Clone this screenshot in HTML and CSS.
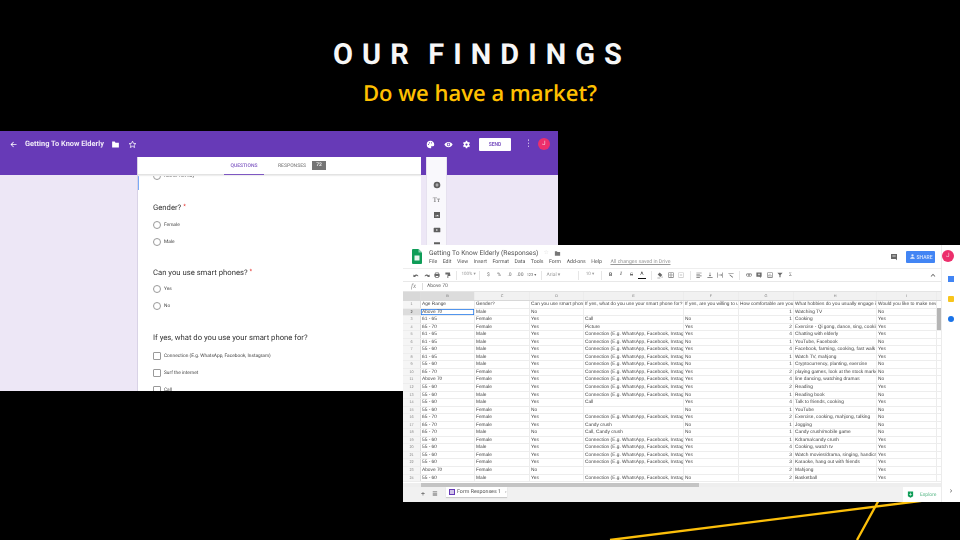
FILE: index.html
```html
<!DOCTYPE html>
<html lang="en">
<head>
<meta charset="utf-8">
<title>Our Findings</title>
<link rel="stylesheet" href="styles.css">
</head>
<body>
<main class="slide">
  <svg class="rays" width="960" height="540" viewBox="0 0 960 540"><path d="M610 540 L960 496 M857 540 L880 498" /></svg>
  <header class="heading">
    <h1>OUR FINDINGS</h1>
    <h2>Do we have a market?</h2>
  </header>

  <section class="form-win">
    <div class="form-top">
      <svg class="ic back" viewBox="0 0 24 24"><path d="M20 11H8l5-5-1.500-1.500L4 12l7.500 7.500L13 18l-5-5h12z"/></svg>
      <span class="form-title">Getting To Know Elderly</span>
      <svg class="ic folder" viewBox="0 0 24 24"><path d="M10 4H3v16h18V7H12z"/></svg>
      <svg class="ic star" viewBox="0 0 24 24"><path d="M12 3l2.700 6 6.300.6-4.800 4.200 1.500 6.200-5.700-3.300L6.300 20l1.500-6.200L3 9.600 9.300 9z" fill="none" stroke="#fff" stroke-width="2"/></svg>
      <span class="spacer"></span>
      <svg class="ic palette" viewBox="0 0 24 24"><path fill-rule="evenodd" d="M12 2a10 10 0 0 0 0 20c2 0 2.500-1.500 1.700-2.700-.8-1.200 0-2.800 1.800-2.800H18a4 4 0 0 0 4-4C22 6.500 17.500 2 12 2zM6.500 10a1.500 1.500 0 1 1 0 3 1.500 1.500 0 0 1 0-3zm3-4a1.500 1.500 0 1 1 0 3 1.500 1.500 0 0 1 0-3zm5 0a1.500 1.500 0 1 1 0 3 1.500 1.500 0 0 1 0-3z"/></svg>
      <svg class="ic eye" viewBox="0 0 24 24"><path fill-rule="evenodd" d="M12 5C7 5 3 8 1 12c2 4 6 7 11 7s9-3 11-7c-2-4-6-7-11-7zm0 2.500a4.500 4.500 0 1 1 0 9 4.500 4.500 0 0 1 0-9zm0 2a2.500 2.500 0 1 0 0 5 2.500 2.500 0 0 0 0-5z"/></svg>
      <svg class="ic gear" viewBox="0 0 24 24"><path fill-rule="evenodd" d="M10 2h4l.5 3 2 1 2.700-1 2 3.500-2.400 2v3l2.400 2-2 3.500-2.700-1-2 1-.5 3h-4l-.5-3-2-1-2.700 1-2-3.500 2.400-2v-3l-2.400-2 2-3.500 2.700 1 2-1zM12 9a3 3 0 1 0 0 6 3 3 0 0 0 0-6z"/></svg>
      <button class="send">SEND</button>
      <span class="dots">⋮</span>
      <span class="avatar">J</span>
    </div>
    <div class="form-body">
      <div class="form-card">
        <nav class="tabs">
          <span class="tab active">QUESTIONS</span>
          <span class="tab">RESPONSES</span>
          <span class="count">72</span>
        </nav>
        <div class="questions">
          <div class="clipped"><i class="radio"></i><span>Rather not say</span></div>
          <h3 class="q q-first">Gender? <b>*</b></h3>
          <div class="opt"><i class="radio"></i><span>Female</span></div>
          <div class="opt"><i class="radio"></i><span>Male</span></div>
          <h3 class="q q-wide">Can you use smart phones? <b>*</b></h3>
          <div class="opt"><i class="radio"></i><span>Yes</span></div>
          <div class="opt"><i class="radio"></i><span>No</span></div>
          <h3 class="q q-last">If yes, what do you use your smart phone for?</h3>
          <div class="opt"><i class="check"></i><span>Connection (E.g. WhatsApp, Facebook, Instagram)</span></div>
          <div class="opt"><i class="check"></i><span>Surf the internet</span></div>
          <div class="opt"><i class="check"></i><span>Call</span></div>
        </div>
      </div>
      <aside class="tools">
        <svg class="tool" viewBox="0 0 24 24"><path fill-rule="evenodd" d="M12 2a10 10 0 1 1 0 20 10 10 0 0 1 0-20zm-1 5v4H7v2h4v4h2v-4h4v-2h-4V7z"/></svg>
        <span class="tool tool-t">Tт</span>
        <svg class="tool" viewBox="0 0 24 24"><path fill-rule="evenodd" d="M3 3h18v18H3zm3 13h12l-4-5-3 3.500-2-2z"/></svg>
        <svg class="tool" viewBox="0 0 24 24"><path fill-rule="evenodd" d="M4 5h16a2 2 0 0 1 2 2v10a2 2 0 0 1-2 2H4a2 2 0 0 1-2-2V7a2 2 0 0 1 2-2zm6 4v6l5-3z"/></svg>
        <svg class="tool" viewBox="0 0 24 24"><path d="M3 4h18v6H3zM3 14h18v6H3z"/></svg>
      </aside>
    </div>
  </section>

  <section class="sheet-win">
    <div class="sheet-main">
      <div class="sheet-top">
        <svg class="logo" viewBox="0 0 20 30"><path d="M0 2a2 2 0 0 1 2-2h11l7 7v21a2 2 0 0 1-2 2H2a2 2 0 0 1-2-2z" fill="#0f9d58"/><path d="M13 0l7 7h-7z" fill="#87ceac"/><rect x="5" y="13" width="10" height="10" fill="#e8f5ee"/></svg>
        <div class="sheet-heading">
          <div class="sheet-title">Getting To Know Elderly (Responses) <span class="s-star">☆</span> <svg class="s-folder" viewBox="0 0 24 24"><path d="M10 4H3v16h18V7H12z"/></svg></div>
          <div class="menu"><span>File</span><span>Edit</span><span>View</span><span>Insert</span><span>Format</span><span>Data</span><span>Tools</span><span>Form</span><span>Add-ons</span><span>Help</span><u>All changes saved in Drive</u></div>
        </div>
        <span class="spacer"></span>
        <svg class="comment" viewBox="0 0 24 24"><path d="M3 3h18v19l-4-4H3z"/><path d="M7 7h10v1.500H7zM7 10.500h10V12H7z" fill="#ddd"/></svg>
        <button class="share"><svg viewBox="0 0 24 24"><path d="M12 4a4 4 0 1 1 0 8 4 4 0 0 1 0-8zM4 20c0-3 4-6 8-6s8 3 8 6z"/></svg>SHARE</button>
        <span class="avatar s-avatar">J</span>
      </div>
      <div class="toolbar">
        <svg class="tb" viewBox="0 0 24 24"><path d="M4 15c2-5 9-7 14-2l3-3v9h-9l3-3c-3-3-8-2-10 1z"  transform="matrix(-1 0 0 1 24 0)"/></svg>
        <svg class="tb" viewBox="0 0 24 24"><path d="M4 15c2-5 9-7 14-2l3-3v9h-9l3-3c-3-3-8-2-10 1z"/></svg>
        <svg class="tb" viewBox="0 0 24 24"><path d="M6 3h12v5h3v10h-3v3H6v-3H3V8h3zm2 2v3h8V5zm0 10v4h8v-4z"/></svg>
        <svg class="tb" viewBox="0 0 24 24"><path d="M3 3h16v7H3zM11 10h9v5h-7v7h-3v-9h1z"/></svg>
        <em></em>
        <span class="w14">100% ▾</span><em></em>
        <span>$</span><span>%</span><span>.0</span><span>.00</span><span class="w9">123 ▾</span><em></em>
        <span class="w30">Arial ▾</span><em></em>
        <span class="w14">10 ▾</span><em></em>
        <span class="bd">B</span><span class="it">I</span><span class="st">S</span><span class="ul">A</span><em></em>
        <svg class="tb" viewBox="0 0 24 24"><path d="M11 3l9 9-7 7-9-9zM19 16c2 3 2 5 0 5s-2-2 0-5zM3 21h10v2H3z"/></svg>
        <svg class="tb" viewBox="0 0 24 24"><path fill-rule="evenodd" d="M3 3h18v18H3zm2 2v6h6V5zm8 0v6h6V5zm-8 8v6h6v-6zm8 0v6h6v-6z"/></svg>
        <svg class="tb light" viewBox="0 0 24 24"><path fill-rule="evenodd" d="M3 3h18v18H3zm2 2v14h14V5zm3 5h8v4H8z"/></svg>
        <em></em>
        <svg class="tb" viewBox="0 0 24 24"><path d="M3 4h18v2H3zM3 9h12v2H3zM3 14h18v2H3zM3 19h12v2H3z"/></svg>
        <svg class="tb" viewBox="0 0 24 24"><path d="M3 19h18v2H3zM11 3h2v9h3l-4 5-4-5h3z"/></svg>
        <svg class="tb" viewBox="0 0 24 24"><path d="M3 3h2v18H3zM19 3h2v18h-2zM7 11h8V8l4 4-4 4v-3H7z"/></svg>
        <svg class="tb" viewBox="0 0 24 24"><path d="M3 5h18v2H3zM8 10l11 9-1.500 2L6.500 12z"/></svg>
        <em></em>
        <svg class="tb" viewBox="0 0 24 24"><path fill-rule="evenodd" d="M7 7h10a5 5 0 0 1 0 10H7A5 5 0 0 1 7 7zm0 2a3 3 0 0 0 0 6h3V9zm7 0v6h3a3 3 0 0 0 0-6z"/></svg>
        <svg class="tb" viewBox="0 0 24 24"><path fill-rule="evenodd" d="M3 3h18v15h-3v4l-4-4H3zm8 3v3H8v2h3v3h2v-3h3V9h-3V6z"/></svg>
        <svg class="tb" viewBox="0 0 24 24"><path fill-rule="evenodd" d="M3 3h18v18H3zm2 2v14h14V5zm2 6h2v6H7zm4-3h2v9h-2zm4 5h2v4h-2z"/></svg>
        <svg class="tb" viewBox="0 0 24 24"><path d="M3 4h18l-7 8v8h-4v-8z"/></svg>
        <span>Σ</span>
        <span class="spacer"></span><svg class="tb" viewBox="0 0 24 24"><path d="M12 8l8 8-2 2-6-6-6 6-2-2z"/></svg>
      </div>
      <div class="fx"><i>fx</i><span>Above 70</span></div>
      <div class="grid">
        <div class="row head"><span class="n"></span><span>B</span><span>C</span><span>D</span><span>E</span><span>F</span><span>G</span><span>H</span><span>I</span></div>
        <div class="row"><span class="n">1</span><span>Age Range</span><span>Gender?</span><span>Can you use smart phones?</span><span>If yes, what do you use your smart phone for?</span><span>If yes, are you willing to use</span><span>How comfortable are you</span><span>What hobbies do you usually engage in?</span><span>Would you like to make new friends?</span></div>
        <div class="row sel"><span class="n">2</span><span class="cur">Above 70</span><span>Male</span><span>No</span><span></span><span></span><span class="r">1</span><span>Watching TV</span><span>No</span></div>
        <div class="row"><span class="n">3</span><span>61 - 65</span><span>Female</span><span>Yes</span><span>Call</span><span>No</span><span class="r">1</span><span>Cooking</span><span>Yes</span></div>
        <div class="row"><span class="n">4</span><span>65 - 70</span><span>Female</span><span>Yes</span><span>Picture</span><span>Yes</span><span class="r">2</span><span>Exercise - Qi gong, dance, sing, cooking</span><span>Yes</span></div>
        <div class="row"><span class="n">5</span><span>61 - 65</span><span>Male</span><span>Yes</span><span>Connection (E.g. WhatsApp, Facebook, Instagram)</span><span>Yes</span><span class="r">4</span><span>Chatting with elderly</span><span>Yes</span></div>
        <div class="row"><span class="n">6</span><span>61 - 65</span><span>Male</span><span>Yes</span><span>Connection (E.g. WhatsApp, Facebook, Instagram)</span><span>No</span><span class="r">1</span><span>YouTube, Facebook</span><span>No</span></div>
        <div class="row"><span class="n">7</span><span>55 - 60</span><span>Male</span><span>Yes</span><span>Connection (E.g. WhatsApp, Facebook, Instagram)</span><span>Yes</span><span class="r">4</span><span>Facebook, farming, cooking, fast walk</span><span>Yes</span></div>
        <div class="row"><span class="n">8</span><span>61 - 65</span><span>Male</span><span>Yes</span><span>Connection (E.g. WhatsApp, Facebook, Instagram)</span><span>No</span><span class="r">1</span><span>Watch TV, mahjong</span><span>Yes</span></div>
        <div class="row"><span class="n">9</span><span>55 - 60</span><span>Male</span><span>Yes</span><span>Connection (E.g. WhatsApp, Facebook, Instagram)</span><span>No</span><span class="r">1</span><span>Cryptocurrency, planting, exercise</span><span>No</span></div>
        <div class="row"><span class="n">10</span><span>65 - 70</span><span>Female</span><span>Yes</span><span>Connection (E.g. WhatsApp, Facebook, Instagram)</span><span>Yes</span><span class="r">2</span><span>playing games, look at the stock market</span><span>No</span></div>
        <div class="row"><span class="n">11</span><span>Above 70</span><span>Female</span><span>Yes</span><span>Connection (E.g. WhatsApp, Facebook, Instagram)</span><span>Yes</span><span class="r">4</span><span>line dancing, watching dramas</span><span>No</span></div>
        <div class="row"><span class="n">12</span><span>55 - 60</span><span>Female</span><span>Yes</span><span>Connection (E.g. WhatsApp, Facebook, Instagram)</span><span>Yes</span><span class="r">2</span><span>Reading</span><span>Yes</span></div>
        <div class="row"><span class="n">13</span><span>55 - 60</span><span>Male</span><span>Yes</span><span>Connection (E.g. WhatsApp, Facebook, Instagram)</span><span>No</span><span class="r">1</span><span>Reading book</span><span>No</span></div>
        <div class="row"><span class="n">14</span><span>55 - 60</span><span>Male</span><span>Yes</span><span>Call</span><span>Yes</span><span class="r">4</span><span>Talk to friends, cooking</span><span>Yes</span></div>
        <div class="row"><span class="n">15</span><span>55 - 60</span><span>Female</span><span>No</span><span></span><span>No</span><span class="r">1</span><span>YouTube</span><span>No</span></div>
        <div class="row"><span class="n">16</span><span>65 - 70</span><span>Female</span><span>Yes</span><span>Connection (E.g. WhatsApp, Facebook, Instagram)</span><span>Yes</span><span class="r">2</span><span>Exercise, cooking, mahjong, talking</span><span>No</span></div>
        <div class="row"><span class="n">17</span><span>65 - 70</span><span>Female</span><span>Yes</span><span>Candy crush</span><span>No</span><span class="r">1</span><span>Jogging</span><span>No</span></div>
        <div class="row"><span class="n">18</span><span>65 - 70</span><span>Male</span><span>No</span><span>Call, Candy crush</span><span>No</span><span class="r">1</span><span>Candy crush/mobile game</span><span>No</span></div>
        <div class="row"><span class="n">19</span><span>55 - 60</span><span>Female</span><span>Yes</span><span>Connection (E.g. WhatsApp, Facebook, Instagram)</span><span>Yes</span><span class="r">1</span><span>Kdrama/candy crush</span><span>Yes</span></div>
        <div class="row"><span class="n">20</span><span>55 - 60</span><span>Male</span><span>Yes</span><span>Connection (E.g. WhatsApp, Facebook, Instagram)</span><span>Yes</span><span class="r">4</span><span>Cooking, watch tv</span><span>Yes</span></div>
        <div class="row"><span class="n">21</span><span>55 - 60</span><span>Female</span><span>Yes</span><span>Connection (E.g. WhatsApp, Facebook, Instagram)</span><span>Yes</span><span class="r">3</span><span>Watch movies/drama, singing, handicraft</span><span>Yes</span></div>
        <div class="row"><span class="n">22</span><span>55 - 60</span><span>Female</span><span>Yes</span><span>Connection (E.g. WhatsApp, Facebook, Instagram)</span><span>Yes</span><span class="r">3</span><span>Karaoke, hang out with friends</span><span>Yes</span></div>
        <div class="row"><span class="n">23</span><span>Above 70</span><span>Female</span><span>No</span><span></span><span></span><span class="r">2</span><span>Mahjong</span><span>Yes</span></div>
        <div class="row"><span class="n">24</span><span>55 - 60</span><span>Male</span><span>Yes</span><span>Connection (E.g. WhatsApp, Facebook, Instagram)</span><span>No</span><span class="r">2</span><span>Basketball</span><span>Yes</span></div>
        <div class="vscroll"></div>
      </div>
      <div class="hscroll"></div>
      <div class="sheet-tabs">
        <span class="plus">+</span><span class="all">≣</span>
        <span class="sheet-tab"><i class="tab-ic"></i>Form Responses 1 <small>▾</small></span>
        <span class="spacer"></span>
        <span class="explore"><svg viewBox="0 0 24 24"><path fill-rule="evenodd" d="M3 2h18v16l-9 5-9-5zm8 4v4H7v2h4v4h2v-4h4v-2h-4V6z"/></svg>Explore</span>
      </div>
    </div>
    <aside class="side">
      <i class="d-blue"></i><i class="d-yellow"></i><i class="d-round"></i>
      <span class="spacer"></span>
      <span class="chev">›</span>
    </aside>
  </section>
</main>
</body>
</html>
```
FILE: styles.css
```css
* { box-sizing: border-box; }
html, body { margin: 0; padding: 0; background: #000; }
.slide { position: relative; width: 960px; height: 540px; overflow: hidden; background: #000; font-family: Roboto, "Liberation Sans", sans-serif; text-rendering: geometricPrecision; }
.rays { position: absolute; left: 0; top: 0; }
.rays path { stroke: #fcbf0a; stroke-width: 2.300; fill: none; }
.spacer { flex: 1; }

.heading { position: relative; text-align: center; padding-top: 36px; }
h1 { margin: 0; font: 700 29px/38px Roboto, sans-serif; letter-spacing: 9.060px; word-spacing: -6px; color: #f7f7f7; padding-left: 4px; }
h2 { margin: 0; padding-top: 1px; font: 600 22px/36px "Open Sans", sans-serif; color: #ffc000; }

.form-win { position: absolute; left: 0; top: 131px; width: 558px; height: 260px; background: #ede7f6; overflow: hidden; filter: blur(.3px); }
.form-top { height: 26px; background: #673ab7; display: flex; align-items: center; padding: 0 8px 0 9px; position: relative; }
.form-body { position: relative; display: flex; height: 234px; background: linear-gradient(#673ab7 18px, #ede7f6 18px); padding-left: 137px; }
.ic { width: 9px; height: 9px; fill: #fff; flex: none; }
.form-title { margin-left: 7px; font: 700 7.400px/10px Roboto, sans-serif; color: #efe9f8; }
.folder { margin-left: 7px; }
.star { margin-left: 8px; }
.eye { margin-left: 9px; }
.gear { margin-left: 9px; }
.send { width: 32px; height: 13px; margin-left: 8px; border: 0; padding: 0; border-radius: 1px; background: #fff; color: #7e57c2; font: 700 5px/13px Roboto, sans-serif; }
.dots { margin-left: 13px; width: 5px; color: #e6def4; font-size: 9px; line-height: 10px; }
.avatar { width: 12px; height: 12px; border-radius: 50%; background: #ec2f6c; color: #f6d0dc; font: 400 6px/12px Roboto, sans-serif; text-align: center; flex: none; margin-left: 9px; }

.form-card { width: 284px; height: 234px; background: #fff; overflow: hidden; border-left: 1px solid #d9d3e6; }
.tabs { height: 18px; display: flex; align-items: center; border-bottom: 1px solid #e3e3e3; position: relative; z-index: 1; background: #fff; padding-left: 86px; gap: 5px; box-shadow: 0 1px 1px #eee; }
.tab { font: 500 5px/18px Roboto, sans-serif; color: #8a8a8a; width: 40px; text-align: center; margin-right: 3px; }
.tab.active { color: #7e57c2; border-bottom: 1px solid #7e57c2; height: 18px; }
.count { background: #757575; color: #eee; font: 700 5px/9px Roboto, sans-serif; width: 14px; height: 9px; text-align: center; margin-left: -8px; }
.questions { padding-left: 15px; position: relative; height: 216px; }
.questions::before { content: ""; position: absolute; left: -1px; top: 0; width: 2px; height: 18px; background: #7baaf7; }
.clipped { height: 8px; margin-top: -3px; display: flex; align-items: center; gap: 3px; font: 400 4.800px/8px Roboto, sans-serif; color: #555; }
.clipped span, .opt span { margin-top: 2px; }
.q { margin: 15.500px 0 0; font: 400 7.700px/12px Roboto, sans-serif; color: #333; height: 12px; }
.q-first { margin-top: 21px; }
.q-wide { margin-bottom: 1px; }
.q-last { margin-top: 17.500px; }
.q b { color: #e53935; font-weight: 400; font-size: 6px; vertical-align: 2px; }
.q + .opt { margin-top: 3px; }
.opt { height: 17px; display: flex; align-items: center; gap: 3px; font: 400 4.800px/10px Roboto, sans-serif; color: #444; }
.radio { width: 8px; height: 8px; border: 1px solid #9a9a9a; border-radius: 50%; flex: none; }
.check { width: 8px; height: 8px; border: 1px solid #9a9a9a; border-radius: 1px; flex: none; }

.tools { width: 19px; height: 234px; margin-left: 6px; background: #f9f8fc; box-shadow: -1px 0 0 #e6e1ef, 1px 0 0 #e6e1ef; display: flex; flex-direction: column; align-items: center; gap: 7px; padding-top: 24px; }
.tool { width: 8px; height: 8px; fill: #5f5f5f; color: #5f5f5f; flex: none; }
.tool-t { font: 400 7px/8px "Liberation Serif", serif; text-align: center; width: 12px; }

.sheet-win { position: absolute; left: 403px; top: 245px; width: 557px; height: 257px; background: #fff; display: flex; overflow: hidden; filter: blur(.3px); }
.sheet-main { width: 538px; display: flex; flex-direction: column; }
.sheet-top { height: 23px; display: flex; align-items: center; padding: 0 0 0 9px; }
.logo { width: 10px; height: 15px; flex: none; margin-top: 0; }
.sheet-heading { margin-left: 7px; align-self: flex-start; margin-top: 3px; }
.sheet-title { font: 400 6.700px/10px Roboto, sans-serif; color: #555; display: flex; align-items: center; gap: 5px; white-space: nowrap; }
.s-star { color: #ddd; font-size: 6px; }
.s-folder { width: 7px; height: 7px; fill: #777; }
.menu { font: 400 5.200px/9px Roboto, sans-serif; color: #555; display: flex; gap: 5.500px; white-space: nowrap; margin-left: 0; }
.menu u { color: #999; margin-left: 3px; }
.comment { width: 8px; height: 8px; fill: #666; flex: none; margin-right: 8px; }
.share { width: 29px; height: 12px; border: 0; padding: 0; background: #4285f4; color: #d9e6fc; font: 500 5px/12px Roboto, sans-serif; border-radius: 1px; display: flex; align-items: center; justify-content: center; gap: 1px; margin-right: 6px; flex: none; }
.share svg { width: 7px; height: 7px; fill: #e3edfd; }
.s-avatar { position: absolute; left: 539px; top: 5px; margin: 0; }

.toolbar { height: 14px; border-top: 1px solid #eee; border-bottom: 1px solid #e8e8e8; display: flex; align-items: center; padding: 0 4px 0 9px; gap: 2.500px; font: 400 5px/12px Roboto, sans-serif; color: #6a6a6a; white-space: nowrap; }
.toolbar span { width: 8px; text-align: center; flex: none; }
.toolbar .spacer { flex: 1; }
.toolbar em { width: 1px; height: 9px; background: #e6e6e6; margin: 0 2px; flex: none; }
.toolbar .w14 { width: 13px; font-size: 4.500px; color: #999; }
.toolbar .w9 { width: 10px; font-size: 4px; }
.toolbar .w30 { width: 27px; text-align: left; color: #999; }
.tb { width: 8px; height: 8px; padding: .5px; fill: #6a6a6a; flex: none; }
.tb.light { fill: #c4c4c4; }
.bd { font-weight: 700; color: #555; }
.it { font-style: italic; font-family: "Liberation Serif", serif; font-weight: 700; }
.st { text-decoration: line-through; }
.toolbar .ul { color: #333; border-bottom: 1.500px solid #111; line-height: 7px; height: 8px; }

.fx { height: 10px; display: flex; align-items: center; font: 400 5px/9px Roboto, sans-serif; color: #666; border-bottom: 1px solid #e4e4e4; }
.fx i { font: italic 7px/9px "Liberation Serif", serif; color: #888; margin-left: 8px; width: 12px; border-right: 1px solid #ddd; height: 7px; line-height: 7px; }
.fx span { margin-left: 4px; }

.grid { position: relative; flex: 1; overflow: hidden; }
.row { display: grid; grid-template-columns: 18px 54px 55px 54px 100px 55px 55px 83px 60px; height: 7.550px; font: 400 4.800px/7.550px "Liberation Sans", Arial, sans-serif; color: #444; border-bottom: .5px solid #ededed; }
.row span { padding: 0 1px; white-space: nowrap; overflow: hidden; border-right: .5px solid #ececec; }
.row .n { background: #f5f5f5; color: #8a8a8a; text-align: center; font-size: 3.800px; border-right: 1px solid #ddd; }
.row .r { text-align: right; }
.head { height: 9px; line-height: 9px; background: #f1f1f1; border-bottom: 1px solid #d8d8d8; }
.head span { text-align: center; font-size: 3.800px; color: #777; }
.head span:nth-child(2) { background: #dcdcdc; }
.head .n { background: #d8d8d8; }
.sel .n { background: #dcdcdc; color: #444; }
.cur { box-shadow: inset 0 0 0 .7px #1a73e8; }
.vscroll { position: absolute; right: 0; top: 16px; width: 4px; height: 22px; background: #b5b5b5; }
.hscroll { height: 4px; background: linear-gradient(90deg, #eee 3.300%, #c4c4c4 3.300%, #c4c4c4 55%, #eee 55%); flex: none; }
.sheet-tabs { height: 15px; background: #f1f1f1; display: flex; align-items: flex-start; font: 400 5.300px/10px Roboto, sans-serif; color: #555; padding-left: 18px; flex: none; }
.plus, .all { width: 6px; margin-right: 5px; margin-top: 2px; color: #666; font-size: 7px; }
.sheet-tab { height: 10px; margin-left: 3px; background: #fff; box-shadow: 0 1px 1px #ccc; display: flex; align-items: center; gap: 2px; width: 61px; padding-left: 3px; white-space: nowrap; }
.sheet-tab small { font-size: 3px; color: #aaa; margin-left: 2px; }
.tab-ic { width: 6px; height: 6px; border: 1.500px solid #673ab7; background: #d1c4e9; flex: none; }
.explore { width: 38px; height: 15px; background: #fff; color: #5cb98a; display: flex; align-items: center; gap: 6px; padding-left: 4px; font-size: 5px; margin-top: 0; }
.explore svg { width: 7px; height: 9px; fill: #0f9d58; flex: none; }

.side { width: 19px; border-left: 1px solid #ececec; display: flex; flex-direction: column; align-items: center; padding-top: 31px; gap: 14px; padding-bottom: 3px; }
.side i { width: 6px; height: 6px; flex: none; }
.d-blue { background: #4285f4; }
.d-yellow { background: #f8c51c; border-radius: 1px; }
.side .d-round { background: #1a73e8; border-radius: 50%; }
.chev { font: 400 8px/10px Roboto, sans-serif; color: #555; margin-bottom: 3px; }
```
